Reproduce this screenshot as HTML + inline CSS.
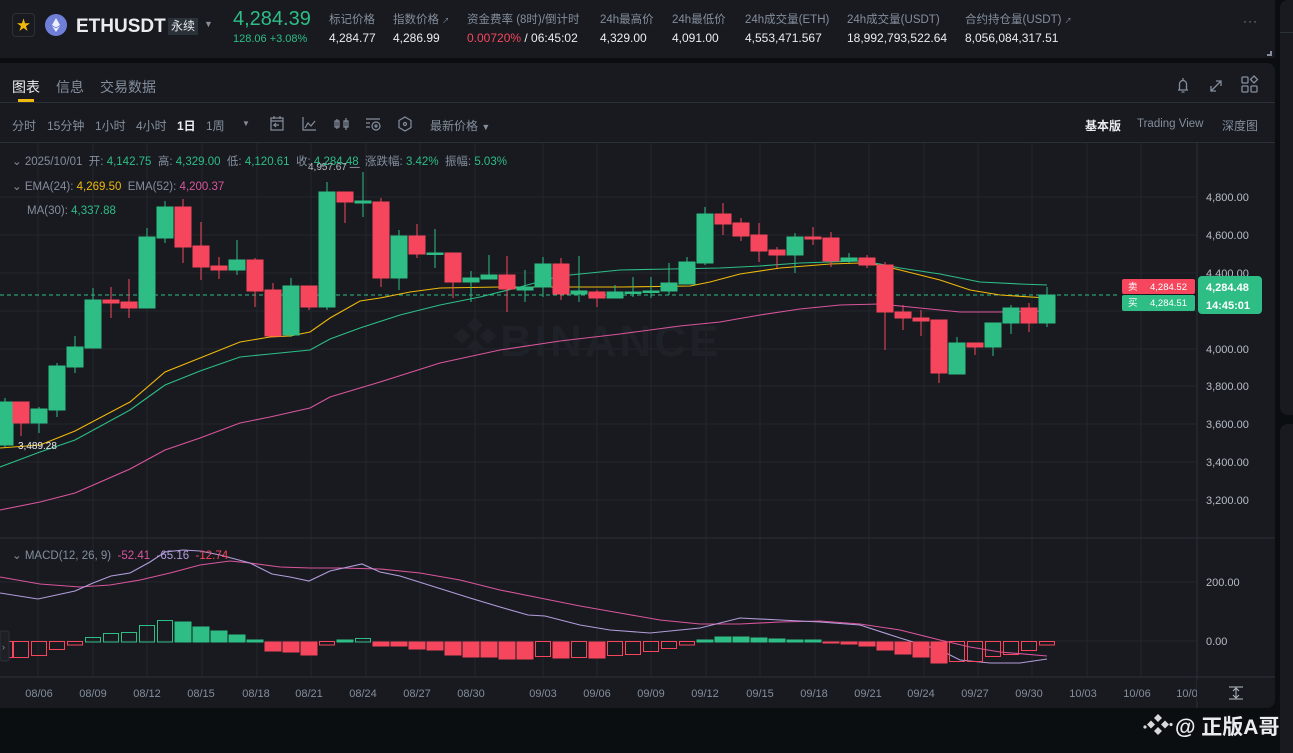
<!DOCTYPE html>
<html><head><meta charset="utf-8">
<style>
*{margin:0;padding:0;box-sizing:border-box}
body{width:1293px;height:753px;background:#0b0e11;position:relative;overflow:hidden;font-family:"Liberation Sans","Noto Sans CJK SC",sans-serif;color:#eaecef}
.p{position:absolute;white-space:nowrap}
.g{color:#848e9c}
.gr{color:#2ebd85}
.rd{color:#f6465d}
</style></head><body>
<div class="p" style="left:0;top:0;width:1275px;height:58px;background:#181a20"></div>
<div class="p" style="left:0;top:63px;width:1275px;height:645px;background:#181a20;border-radius:0 8px 8px 0"></div>
<div class="p" style="left:1280px;top:0;width:13px;height:415px;background:#181a20;border-radius:8px 0 0 8px"></div>
<div class="p" style="left:1280px;top:32px;width:13px;height:1px;background:#2b3139"></div>
<div class="p" style="left:1280px;top:424px;width:13px;height:329px;background:#181a20;border-radius:8px 0 0 0"></div>

<div class="p" style="left:12px;top:13px;width:23px;height:24px;border:1px solid #2b3139;border-radius:4px;color:#f0b90b;font-size:14px;text-align:center;line-height:22px">★</div>
<div class="p" style="left:45px;top:14px;width:22px;height:22px;border-radius:50%;background:#6f7fd8"></div>
<svg class="p" style="left:45px;top:14px" width="22" height="22"><path d="M11 4 L15 11 L11 13.5 L7 11 Z M11 14.5 L15 12 L11 18 L7 12 Z" fill="#eef"/></svg>
<div class="p" style="left:76px;top:16px;font-size:19px;font-weight:bold;color:#eaecef">ETHUSDT</div>
<div class="p" style="left:168px;top:18px;height:17px;padding:0 3px;background:#2b3139;font-size:12px;line-height:17px;color:#eaecef">永续</div>
<div class="p g" style="left:204px;top:19px;font-size:9px">▼</div>
<div class="p gr" style="left:233px;top:8px;font-size:20px">4,284.39</div>
<div class="p gr" style="left:233px;top:33px;font-size:11px">128.06 +3.08%</div>
<div class="p g" style="left:329px;top:11px;font-size:11.5px">标记价格</div>
<div class="p" style="left:329px;top:31px;font-size:12px">4,284.77</div>
<div class="p g" style="left:393px;top:11px;font-size:11.5px">指数价格 <span style="font-size:7px">↗</span></div>
<div class="p" style="left:393px;top:31px;font-size:12px">4,286.99</div>
<div class="p g" style="left:467px;top:11px;font-size:11.5px">资金费率 (8时)/倒计时</div>
<div class="p" style="left:467px;top:31px;font-size:12px"><span class="rd">0.00720%</span> / 06:45:02</div>
<div class="p g" style="left:600px;top:11px;font-size:11.5px">24h最高价</div>
<div class="p" style="left:600px;top:31px;font-size:12px">4,329.00</div>
<div class="p g" style="left:672px;top:11px;font-size:11.5px">24h最低价</div>
<div class="p" style="left:672px;top:31px;font-size:12px">4,091.00</div>
<div class="p g" style="left:745px;top:11px;font-size:11.5px">24h成交量(ETH)</div>
<div class="p" style="left:745px;top:31px;font-size:12px">4,553,471.567</div>
<div class="p g" style="left:847px;top:11px;font-size:11.5px">24h成交量(USDT)</div>
<div class="p" style="left:847px;top:31px;font-size:12px">18,992,793,522.64</div>
<div class="p g" style="left:965px;top:11px;font-size:11.5px">合约持仓量(USDT) <span style="font-size:7px">↗</span></div>
<div class="p" style="left:965px;top:31px;font-size:12px">8,056,084,317.51</div>
<div class="p g" style="left:1243px;top:14px;font-size:12px;letter-spacing:1px">···</div>
<div class="p" style="left:1267px;top:51px;width:5px;height:5px;border-right:2px solid #848e9c;border-bottom:2px solid #848e9c"></div>

<div class="p" style="left:12px;top:77px;font-size:14px;color:#eaecef">图表</div>
<div class="p" style="left:18px;top:99px;width:16px;height:3px;background:#f0b90b"></div>
<div class="p g" style="left:56px;top:77px;font-size:14px">信息</div>
<div class="p g" style="left:100px;top:77px;font-size:14px">交易数据</div>
<div class="p" style="left:0;top:102px;width:1275px;height:1px;background:#2b3139"></div>
<svg class="p" style="left:1170px;top:72px" width="100" height="26" fill="none" stroke="#848e9c" stroke-width="1.3">
<path d="M8 18 h10 M9.5 18 v-6 a3.5 3.5 0 0 1 7 0 v6 M13 6 v2 M11.5 20 h3"/>
<path d="M41 19 l10 -10 M46 9 h5 v5 M41 14 v5 h5"/>
<rect x="72" y="5" width="6" height="6" rx="1"/><rect x="72" y="14" width="6" height="6" rx="1"/><rect x="81" y="14" width="6" height="6" rx="1"/><path d="M84 4 l3.5 3.5 -3.5 3.5 -3.5 -3.5z"/>
</svg>

<div class="p g" style="left:12px;top:117px;font-size:12px">分时</div>
<div class="p g" style="left:47px;top:117px;font-size:12px">15分钟</div>
<div class="p g" style="left:95px;top:117px;font-size:12px">1小时</div>
<div class="p g" style="left:136px;top:117px;font-size:12px">4小时</div>
<div class="p" style="left:177px;top:117px;font-size:12px;font-weight:bold;color:#eaecef">1日</div>
<div class="p g" style="left:206px;top:117px;font-size:12px">1周</div>
<div class="p g" style="left:242px;top:119px;font-size:8px">▼</div>
<svg class="p" style="left:265px;top:112px" width="160" height="24" fill="none" stroke="#848e9c" stroke-width="1.2">
<rect x="6" y="6" width="12" height="12"/><path d="M6 9 h12 M9 4 v3 M15 4 v3 M14 13 h-5 l2 -2 M9 13 l2 2"/>
<path d="M38 5 v13 h13 M40 16 l3 -5 3 3 4 -5"/>
<path d="M72 7 v10 M70 9 h4 v6 h-4z M81 6 v12 M79 9 h4 v6 h-4z"/>
<path d="M101 7 h14 M101 11 h4 M101 15 h4"/><circle cx="111" cy="14" r="4"/><circle cx="111" cy="14" r="1"/>
<path d="M140 5 l6 3.5 v7 l-6 3.5 -6 -3.5 v-7z"/><circle cx="140" cy="12" r="1.5"/>
</svg>
<div class="p g" style="left:430px;top:117px;font-size:12px">最新价格 <span style="font-size:9px">▼</span></div>
<div class="p" style="left:1085px;top:117px;font-size:12px;font-weight:bold;color:#eaecef">基本版</div>
<div class="p g" style="left:1137px;top:118px;font-size:11.5px">Trading View</div>
<div class="p g" style="left:1222px;top:117px;font-size:12px">深度图</div>
<div class="p" style="left:0;top:142px;width:1275px;height:1px;background:#2b3139"></div>

<svg class="p" style="left:0;top:0" width="1293" height="753">
<g stroke="#23262d" stroke-width="1">
<path d="M0 197H1197M0 235H1197M0 273H1197M0 311H1197M0 349H1197M0 386H1197M0 424H1197M0 462H1197M0 500H1197M0 582H1197M0 641H1197"/>
<path d="M38 143V677M93 143V677M147 143V677M202 143V677M257 143V677M311 143V677M366 143V677M420 143V677M475 143V677M543 143V677M597 143V677M651 143V677M706 143V677M760 143V677M815 143V677M869 143V677M924 143V677M978 143V677M1032 143V677M1087 143V677M1141 143V677"/>
</g>
<path d="M0 538H1275M0 677H1275" stroke="#2b3139"/>
<path d="M1197 143V708" stroke="#2b3139"/>
<g fill="#1e2127"><path d="M475 326l8 8-8 8-8-8zM475 348l8 8-8 8-8-8zM462 337l8 8-8 8-8-8zM488 337l8 8-8 8-8-8z" transform="translate(0,-9)"/></g>
<text x="500" y="356" font-family="Liberation Sans" font-weight="bold" font-size="44" fill="#1e2127" letter-spacing="3">BINANCE</text>
<path d="M0 295H1120" stroke="#2ebd85" stroke-dasharray="4 3" stroke-width="1"/>
<g fill="none" stroke-width="1.1">
<polyline stroke="#f0b90b" points="0,448 40,445 75,431 130,402 165,372 200,358 240,342 270,337 290,336 310,332 330,318 360,301 380,298 410,292 440,288 500,287 560,287 620,287 690,286 710,282 740,274 780,268 830,264 860,263 880,265 900,270 940,280 970,290 1000,295 1047,298"/>
<polyline stroke="#2ebd85" points="0,467 40,452 75,440 130,410 165,385 200,371 240,357 270,354 310,350 330,339 360,328 400,315 440,305 480,297 520,287 560,276 620,270 670,269 720,268 760,266 800,263 830,262 860,261 880,264 900,268 940,274 980,282 1020,284 1047,285"/>
<polyline stroke="#d9559b" points="0,510 40,502 75,493 130,469 165,450 200,438 240,423 270,417 310,408 330,397 380,382 440,363 500,350 560,341 620,334 680,326 720,322 760,315 800,309 840,305 880,304 920,308 960,312 1000,312 1047,311"/>
</g>
<g stroke-width="1">
<g fill="#2ebd85" stroke="#2ebd85">
<path d="M5 398V447M39 407V433M57 363V417M75 336V373M93 288V348M147 228V308M165 201V243M237 240V275M291 278V337M327 182V310M363 172V217M399 230V290M435 229V268M471 271V302M489 255V279M525 270V302M543 257V297M579 256V302M615 285V298M633 277V297M651 277V298M669 263V295M687 257V284M705 207V265M795 233V273M849 253V263M957 337V374M993 323V356M1011 305V334M1047 287V327"/>
<rect x="-3" y="402" width="16" height="43"/><rect x="31" y="409" width="16" height="14"/><rect x="49" y="366" width="16" height="44"/><rect x="67" y="347" width="16" height="20"/><rect x="85" y="300" width="16" height="48"/><rect x="139" y="237" width="16" height="71"/><rect x="157" y="207" width="16" height="31"/><rect x="229" y="260" width="16" height="10"/><rect x="283" y="286" width="16" height="49"/><rect x="319" y="192" width="16" height="115"/><rect x="355" y="201" width="16" height="2"/><rect x="391" y="236" width="16" height="42"/><rect x="427" y="253" width="16" height="1.5"/><rect x="463" y="278" width="16" height="4"/><rect x="481" y="275" width="16" height="4"/><rect x="517" y="287" width="16" height="3"/><rect x="535" y="264" width="16" height="23"/><rect x="571" y="291" width="16" height="3"/><rect x="607" y="292" width="16" height="6"/><rect x="625" y="292" width="16" height="1.5"/><rect x="643" y="291" width="16" height="1.5"/><rect x="661" y="283" width="16" height="8"/><rect x="679" y="262" width="16" height="22"/><rect x="697" y="214" width="16" height="49"/><rect x="787" y="237" width="16" height="18"/><rect x="841" y="258" width="16" height="3"/><rect x="949" y="343" width="16" height="31"/><rect x="985" y="323" width="16" height="24"/><rect x="1003" y="308" width="16" height="15"/><rect x="1039" y="295" width="16" height="28"/>
</g>
<g fill="#f6465d" stroke="#f6465d">
<path d="M21 402V436M111 287V318M129 279V318M183 199V263M201 222V280M219 257V279M255 258V307M273 283V336M309 286V310M345 192V223M381 198V287M417 224V258M453 253V298M507 256V312M561 258V300M597 290V307M723 203V235M741 218V241M759 223V262M777 247V268M813 227V245M831 232V267M867 255V268M885 262V350M903 305V330M921 310V336M939 320V383M975 343V355M1029 303V332"/>
<rect x="13" y="402" width="16" height="21"/><rect x="103" y="300" width="16" height="3"/><rect x="121" y="302" width="16" height="6"/><rect x="175" y="207" width="16" height="40"/><rect x="193" y="246" width="16" height="21"/><rect x="211" y="266" width="16" height="4"/><rect x="247" y="260" width="16" height="31"/><rect x="265" y="290" width="16" height="46"/><rect x="301" y="286" width="16" height="21"/><rect x="337" y="192" width="16" height="10"/><rect x="373" y="202" width="16" height="76"/><rect x="409" y="236" width="16" height="18"/><rect x="445" y="253" width="16" height="29"/><rect x="499" y="275" width="16" height="14"/><rect x="553" y="264" width="16" height="30"/><rect x="589" y="292" width="16" height="6"/><rect x="715" y="214" width="16" height="10"/><rect x="733" y="223" width="16" height="13"/><rect x="751" y="235" width="16" height="16"/><rect x="769" y="250" width="16" height="5"/><rect x="805" y="237" width="16" height="2"/><rect x="823" y="238" width="16" height="23"/><rect x="859" y="258" width="16" height="7"/><rect x="877" y="265" width="16" height="47"/><rect x="895" y="312" width="16" height="6"/><rect x="913" y="318" width="16" height="3"/><rect x="931" y="320" width="16" height="53"/><rect x="967" y="343" width="16" height="4"/><rect x="1021" y="308" width="16" height="15"/>
</g>
</g>
<text x="308" y="170" font-family="Liberation Sans" font-size="10" fill="#b7bdc6">4,957.67 —</text>
<text x="18" y="449" font-family="Liberation Sans" font-size="10" fill="#eaecef">3,489.28</text>
<g fill="none" stroke-width="1.1">
<polyline stroke="#d9559b" points="0,577 40,584 80,587 110,585 140,580 170,573 200,565 230,561 250,563 280,567 310,568 340,568 380,569 420,573 460,580 500,590 540,598 580,606 620,613 660,620 700,624 740,624 780,622 820,621 860,624 900,630 940,640 970,647 1000,652 1047,656"/>
<polyline stroke="#b39ddb" points="0,593 38,599 75,591 93,583 111,576 130,573 150,562 165,552 183,550 200,551 220,555 250,563 272,574 290,577 309,581 330,571 362,564 380,572 400,576 435,587 470,598 500,607 528,615 545,616 580,625 610,630 650,633 700,628 740,618 780,620 820,622 860,625 900,638 940,650 960,660 990,663 1020,663 1047,659"/>
</g>
<g stroke-width="1">
<g fill="#2ebd85" stroke="#2ebd85"><rect x="175" y="622" width="16" height="20"/><rect x="193" y="627" width="16" height="15"/><rect x="211" y="631" width="16" height="11"/><rect x="229" y="635" width="16" height="7"/><rect x="247" y="640" width="16" height="2"/><rect x="337" y="640" width="16" height="2"/><rect x="697" y="640" width="16" height="2"/><rect x="715" y="637" width="16" height="5"/><rect x="733" y="637" width="16" height="5"/><rect x="751" y="638" width="16" height="4"/><rect x="769" y="639" width="16" height="3"/><rect x="787" y="640" width="16" height="2"/><rect x="805" y="640" width="16" height="2"/></g>
<g fill="none" stroke="#2ebd85"><rect x="85.5" y="637.5" width="15" height="4.5"/><rect x="103.5" y="633.5" width="15" height="8.5"/><rect x="121.5" y="632.5" width="15" height="9.5"/><rect x="139.5" y="625.5" width="15" height="16.5"/><rect x="157.5" y="620.5" width="15" height="21.5"/><rect x="355.5" y="638.5" width="15" height="3.5"/></g>
<g fill="#f6465d" stroke="#f6465d"><rect x="265" y="642" width="16" height="9"/><rect x="283" y="642" width="16" height="10"/><rect x="301" y="642" width="16" height="13"/><rect x="373" y="642" width="16" height="4"/><rect x="391" y="642" width="16" height="4"/><rect x="409" y="642" width="16" height="7"/><rect x="427" y="642" width="16" height="8"/><rect x="445" y="642" width="16" height="13"/><rect x="463" y="642" width="16" height="15"/><rect x="481" y="642" width="16" height="15"/><rect x="499" y="642" width="16" height="17"/><rect x="517" y="642" width="16" height="17"/><rect x="553" y="642" width="16" height="16"/><rect x="589" y="642" width="16" height="16"/><rect x="823" y="642" width="16" height="1"/><rect x="841" y="642" width="16" height="2"/><rect x="859" y="642" width="16" height="4"/><rect x="877" y="642" width="16" height="8"/><rect x="895" y="642" width="16" height="12"/><rect x="913" y="642" width="16" height="15"/><rect x="931" y="642" width="16" height="21"/></g>
<g fill="none" stroke="#f6465d"><rect x="-2.5" y="641.5" width="15" height="16"/><rect x="13.5" y="641.5" width="15" height="16"/><rect x="31.5" y="641.5" width="15" height="14"/><rect x="49.5" y="641.5" width="15" height="8"/><rect x="67.5" y="641.5" width="15" height="3.5"/><rect x="319.5" y="641.5" width="15" height="3.5"/><rect x="535.5" y="641.5" width="15" height="15"/><rect x="571.5" y="641.5" width="15" height="16"/><rect x="607.5" y="641.5" width="15" height="14"/><rect x="625.5" y="641.5" width="15" height="13"/><rect x="643.5" y="641.5" width="15" height="10"/><rect x="661.5" y="641.5" width="15" height="7"/><rect x="679.5" y="641.5" width="15" height="3.5"/><rect x="949.5" y="641.5" width="15" height="20"/><rect x="967.5" y="641.5" width="15" height="20"/><rect x="985.5" y="641.5" width="15" height="15"/><rect x="1003.5" y="641.5" width="15" height="13"/><rect x="1021.5" y="641.5" width="15" height="9"/><rect x="1039.5" y="641.5" width="15" height="3.5"/></g>
</g>
<g font-family="Liberation Sans" font-size="11" fill="#b7bdc6">
<text x="1206" y="201">4,800.00</text><text x="1206" y="239">4,600.00</text><text x="1206" y="277">4,400.00</text><text x="1206" y="353">4,000.00</text><text x="1206" y="390">3,800.00</text><text x="1206" y="428">3,600.00</text><text x="1206" y="466">3,400.00</text><text x="1206" y="504">3,200.00</text><text x="1206" y="586">200.00</text><text x="1206" y="645">0.00</text>
</g>
<g font-family="Liberation Sans" font-size="11" fill="#848e9c" text-anchor="middle">
<text x="39" y="697">08/06</text><text x="93" y="697">08/09</text><text x="147" y="697">08/12</text><text x="201" y="697">08/15</text><text x="256" y="697">08/18</text><text x="309" y="697">08/21</text><text x="363" y="697">08/24</text><text x="417" y="697">08/27</text><text x="471" y="697">08/30</text><text x="543" y="697">09/03</text><text x="597" y="697">09/06</text><text x="651" y="697">09/09</text><text x="705" y="697">09/12</text><text x="760" y="697">09/15</text><text x="814" y="697">09/18</text><text x="868" y="697">09/21</text><text x="921" y="697">09/24</text><text x="975" y="697">09/27</text><text x="1029" y="697">09/30</text><text x="1083" y="697">10/03</text><text x="1137" y="697">10/06</text><text x="1187" y="697">10/0</text>
</g>
<rect x="1197" y="680" width="78" height="22" fill="#181a20"/>
<path d="M1229 687h14M1229 699h14M1236 689v8M1233 691l3-3 3 3M1233 695l3 3 3-3" stroke="#b7bdc6" fill="none"/>
<rect x="1122" y="279" width="73" height="15" rx="2" fill="#f6465d"/>
<rect x="1122" y="295" width="73" height="16" rx="2" fill="#2ebd85"/>
<g font-family="Liberation Sans,Noto Sans CJK SC,sans-serif" font-size="9.5" fill="#fff"><text x="1128" y="290">卖</text><text x="1150" y="290">4,284.52</text><text x="1128" y="306">买</text><text x="1150" y="306">4,284.51</text></g>
<rect x="1198" y="276" width="64" height="38" rx="4" fill="#2ebd85"/>
<g font-family="Liberation Sans" font-size="11" font-weight="bold" fill="#fff"><text x="1206" y="291">4,284.48</text><text x="1206" y="309">14:45:01</text></g>
<rect x="0" y="631" width="9" height="30" rx="2" fill="#1e2026" stroke="#2b3139"/>
<text x="2" y="650" font-size="9" fill="#848e9c" font-family="Liberation Sans">›</text>
<g fill="#d8d8d8"><path d="M1158 716l4 4-4 4-4-4zM1158 729l4 4-4 4-4-4zM1151 722.5l4 4-4 4-4-4zM1165 722.5l4 4-4 4-4-4z" transform="translate(0,-2)"/><circle cx="1145" cy="727" r="1.6"/><circle cx="1171" cy="724.5" r="1.6"/></g>
<text x="1175" y="734" font-family="Liberation Sans,Noto Sans CJK SC,sans-serif" font-size="21" font-weight="bold" fill="#eaecef">@ 正版A哥</text>
</svg>

<div class="p" style="left:12px;top:153px;font-size:11.5px"><span class="g">⌄ 2025/10/01&nbsp; 开:</span> <span class="gr">4,142.75</span>&nbsp; <span class="g">高:</span> <span class="gr">4,329.00</span>&nbsp; <span class="g">低:</span> <span class="gr">4,120.61</span>&nbsp; <span class="g">收:</span> <span class="gr">4,284.48</span>&nbsp; <span class="g">涨跌幅:</span> <span class="gr">3.42%</span>&nbsp; <span class="g">振幅:</span> <span class="gr">5.03%</span></div>
<div class="p" style="left:12px;top:179px;font-size:11.5px"><span class="g">⌄ EMA(24):</span> <span style="color:#f0b90b">4,269.50</span>&nbsp; <span class="g">EMA(52):</span> <span style="color:#d9559b">4,200.37</span></div>
<div class="p" style="left:27px;top:205px;font-size:11.5px"><span class="g">MA(30):</span> <span class="gr">4,337.88</span></div>
<div class="p" style="left:12px;top:548px;font-size:11.5px"><span class="g">⌄ MACD(12, 26, 9)</span>&nbsp; <span style="color:#d9559b">-52.41</span>&nbsp; <span style="color:#b39ddb">-65.16</span>&nbsp; <span class="rd">-12.74</span></div>
</body></html>
